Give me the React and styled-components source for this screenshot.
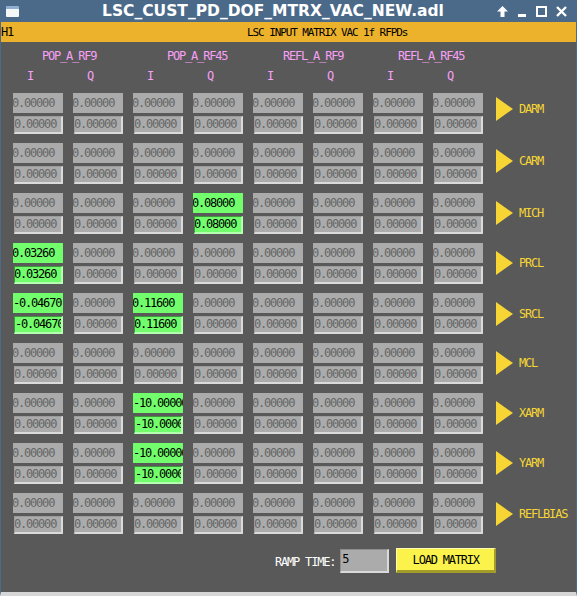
import React from 'react';
import styled, { createGlobalStyle } from 'styled-components';

const GlobalStyle = createGlobalStyle`
  html, body {
    margin: 0;
    padding: 0;
    background: #595959;
  }
`;

const MONO = `"DejaVu Sans Mono", "Liberation Mono", monospace`;

const Window = styled.div`
  width: 577px;
  height: 596px;
  display: flex;
  flex-direction: column;
  overflow: hidden;
  background: #595959;
`;

const TitleBar = styled.div`
  height: 22px;
  flex: none;
  background: #4b6a89;
  display: flex;
  align-items: center;
  padding: 0 10px 0 6px;
`;

const AppIcon = styled.div`
  width: 13px;
  height: 11px;
  background: #f4f6f8;
  border-top: 3px solid #8fb0d2;
  box-sizing: border-box;
  border-radius: 1px;
`;

const Title = styled.div`
  flex: 1;
  text-align: center;
  color: #ffffff;
  font-family: "DejaVu Sans", "Liberation Sans", sans-serif;
  font-weight: bold;
  font-size: 15.5px;
  padding-left: 30px;
  white-space: nowrap;
`;

const Controls = styled.div`
  display: flex;
  align-items: center;
  gap: 9px;
`;

const Frame = styled.div`
  flex: 1;
  display: flex;
  flex-direction: column;
  border-left: 1px solid #4b6a89;
  border-right: 1px solid #4b6a89;
  border-bottom: 4px solid #d6d6d6;
`;

const Banner = styled.div`
  height: 20px;
  flex: none;
  background: #ecb22b;
  display: flex;
  align-items: center;
  font-family: ${MONO};
  font-size: 12px;
  letter-spacing: -1.2px;
  color: #000;
`;

const BannerText = styled.span`
  margin-left: ${p => p.$indent}px;
  font-size: 11px;
  letter-spacing: -1.1px;
`;

const Body = styled.div`
  flex: 1;
  padding: 6px 0 0 12px;
  font-family: ${MONO};
  font-size: 12px;
  letter-spacing: -1.2px;
`;

const HeaderRow = styled.div`
  display: grid;
  grid-template-columns: repeat(${p => p.$cols}, ${p => p.$width}px);
  column-gap: 10px;
  height: ${p => p.$height}px;
  margin-top: ${p => p.$top}px;
  margin-left: ${p => p.$shift || 0}px;
  align-items: center;
`;

const PinkLabel = styled.div`
  color: #f7a0f7;
  text-align: center;
  white-space: nowrap;
`;

const SensorLabel = styled.div`
  color: #f7a0f7;
  white-space: nowrap;
  margin-left: ${p => p.$indent}px;
`;

const Matrix = styled.div`
  margin-top: 7px;
  display: flex;
  flex-direction: column;
  gap: 9px;
`;

const DofRow = styled.div`
  display: flex;
  height: 41px;
`;

const Cells = styled.div`
  display: grid;
  grid-template-columns: repeat(8, 50px);
  column-gap: 10px;
`;

const CellStack = styled.div`
  display: flex;
  flex-direction: column;
  gap: 3px;
`;

const Readback = styled.div`
  height: 20px;
  background: ${p => (p.$on ? '#72fe6c' : '#ababab')};
  color: ${p => (p.$on ? '#000' : '#666')};
  line-height: 20px;
  overflow: hidden;
  white-space: nowrap;
  text-indent: ${p => (p.$neg ? 0 : -1)}px;
`;

const Entry = styled.div`
  height: 18px;
  margin-left: 1px;
  box-sizing: border-box;
  background: ${p => (p.$on ? '#72fe6c' : '#ababab')};
  color: ${p => (p.$on ? '#000' : '#666')};
  border-top: 1px solid ${p => (p.$on ? '#3c9a3c' : '#9c9c9c')};
  border-left: 1px solid ${p => (p.$on ? '#3c9a3c' : '#9c9c9c')};
  border-right: 2px solid ${p => (p.$on ? '#b4ffb0' : '#dadada')};
  border-bottom: 2px solid ${p => (p.$on ? '#b4ffb0' : '#dadada')};
  line-height: 15px;
  overflow: hidden;
  white-space: nowrap;
  text-indent: ${p => (p.$neg ? 0 : -1)}px;
`;

const DofLink = styled.div`
  display: flex;
  align-items: center;
  margin-left: 13px;
  height: 24px;
  margin-top: ${p => p.$offset}px;
  color: #f6d535;
  gap: 6px;
`;

const Footer = styled.div`
  margin-top: 14px;
  padding-left: 262px;
  display: flex;
  align-items: center;
  height: 25px;
`;

const RampLabel = styled.span`
  color: #ffffff;
  margin-right: 5px;
  margin-top: 2px;
`;

const RampEntry = styled.div`
  width: 49px;
  height: 24px;
  box-sizing: border-box;
  background: #ababab;
  color: #000;
  border-top: 1px solid #8e8e8e;
  border-left: 1px solid #8e8e8e;
  border-right: 2px solid #dadada;
  border-bottom: 2px solid #dadada;
  line-height: 18px;
  text-indent: 1px;
  overflow: hidden;
`;

const LoadButton = styled.button`
  margin-left: 7px;
  width: 100px;
  height: 25px;
  box-sizing: border-box;
  background: #fbf34b;
  border-top: 1px solid #fffbb0;
  border-left: 1px solid #fffbb0;
  border-right: 2px solid #a39b2a;
  border-bottom: 3px solid #a39b2a;
  padding: 0;
  font-family: ${MONO};
  font-size: 12px;
  letter-spacing: -1.2px;
  color: #000;
`;

const Arrow = () => (
  <svg width="17" height="24" viewBox="0 0 17 24">
    <polygon points="0,0 17,12 0,24" fill="#f6d535" />
  </svg>
);

const UpIcon = () => (
  <svg width="11" height="11" viewBox="0 0 11 11">
    <polygon points="5.5,0 11,5.5 7.5,5.5 7.5,11 3.5,11 3.5,5.5 0,5.5" fill="#fff" />
  </svg>
);

const MinIcon = () => (
  <svg width="10" height="11" viewBox="0 0 10 11">
    <rect x="1" y="8" width="8" height="3" fill="#fff" />
  </svg>
);

const MaxIcon = () => (
  <svg width="11" height="11" viewBox="0 0 11 11">
    <rect x="1" y="1" width="9" height="9" fill="none" stroke="#fff" strokeWidth="2" />
  </svg>
);

const CloseIcon = () => (
  <svg width="11" height="11" viewBox="0 0 11 11">
    <path d="M1 1 L10 10 M10 1 L1 10" stroke="#fff" strokeWidth="2.4" />
  </svg>
);

// photodiode name and where its label sits inside its I/Q pair
const sensors = [
  { name: 'POP_A_RF9', indent: 29 },
  { name: 'POP_A_RF45', indent: 34 },
  { name: 'REFL_A_RF9', indent: 30 },
  { name: 'REFL_A_RF45', indent: 25 },
];

// degree of freedom, arrow offset, nonzero matrix elements by column
const dofs = [
  { name: 'DARM', offset: 4, values: {} },
  { name: 'CARM', offset: 6, values: {} },
  { name: 'MICH', offset: 8, values: { 3: 0.08 } },
  { name: 'PRCL', offset: 8, values: { 0: 0.0326 } },
  { name: 'SRCL', offset: 9, values: { 0: -0.0467, 2: 0.116 } },
  { name: 'MCL', offset: 8, values: {} },
  { name: 'XARM', offset: 8, values: { 2: -10 } },
  { name: 'YARM', offset: 8, values: { 2: -10 } },
  { name: 'REFLBIAS', offset: 9, values: {} },
];

const MatrixCell = ({ value }) => {
  const on = value !== 0;
  const neg = value < 0;
  const text = value.toFixed(5);
  return (
    <CellStack>
      <Readback $on={on} $neg={neg}>{text}</Readback>
      <Entry $on={on} $neg={neg}>{text}</Entry>
    </CellStack>
  );
};

export default function App() {
  return (
    <>
      <GlobalStyle />
      <Window>
        <TitleBar>
          <AppIcon />
          <Title>LSC_CUST_PD_DOF_MTRX_VAC_NEW.adl</Title>
          <Controls>
            <UpIcon />
            <MinIcon />
            <MaxIcon />
            <CloseIcon />
          </Controls>
        </TitleBar>
        <Frame>
          <Banner>
            <span>H1</span>
            <BannerText $indent={234}>LSC INPUT MATRIX VAC 1f RFPDs</BannerText>
          </Banner>
          <Body>
            <HeaderRow $cols={4} $width={110} $height={16} $top={0}>
              {sensors.map(s => (
                <SensorLabel key={s.name} $indent={s.indent}>{s.name}</SensorLabel>
              ))}
            </HeaderRow>
            <HeaderRow $cols={8} $width={50} $height={20} $top={2} $shift={-8}>
              {sensors.flatMap(s => [
                <PinkLabel key={s.name + 'I'}>I</PinkLabel>,
                <PinkLabel key={s.name + 'Q'}>Q</PinkLabel>,
              ])}
            </HeaderRow>
            <Matrix>
              {dofs.map(dof => (
                <DofRow key={dof.name}>
                  <Cells>
                    {Array.from({ length: 8 }, (_, i) => (
                      <MatrixCell key={i} value={dof.values[i] || 0} />
                    ))}
                  </Cells>
                  <DofLink $offset={dof.offset}>
                    <Arrow />
                    <span>{dof.name}</span>
                  </DofLink>
                </DofRow>
              ))}
            </Matrix>
            <Footer>
              <RampLabel>RAMP TIME:</RampLabel>
              <RampEntry>5</RampEntry>
              <LoadButton>LOAD MATRIX</LoadButton>
            </Footer>
          </Body>
        </Frame>
      </Window>
    </>
  );
}
